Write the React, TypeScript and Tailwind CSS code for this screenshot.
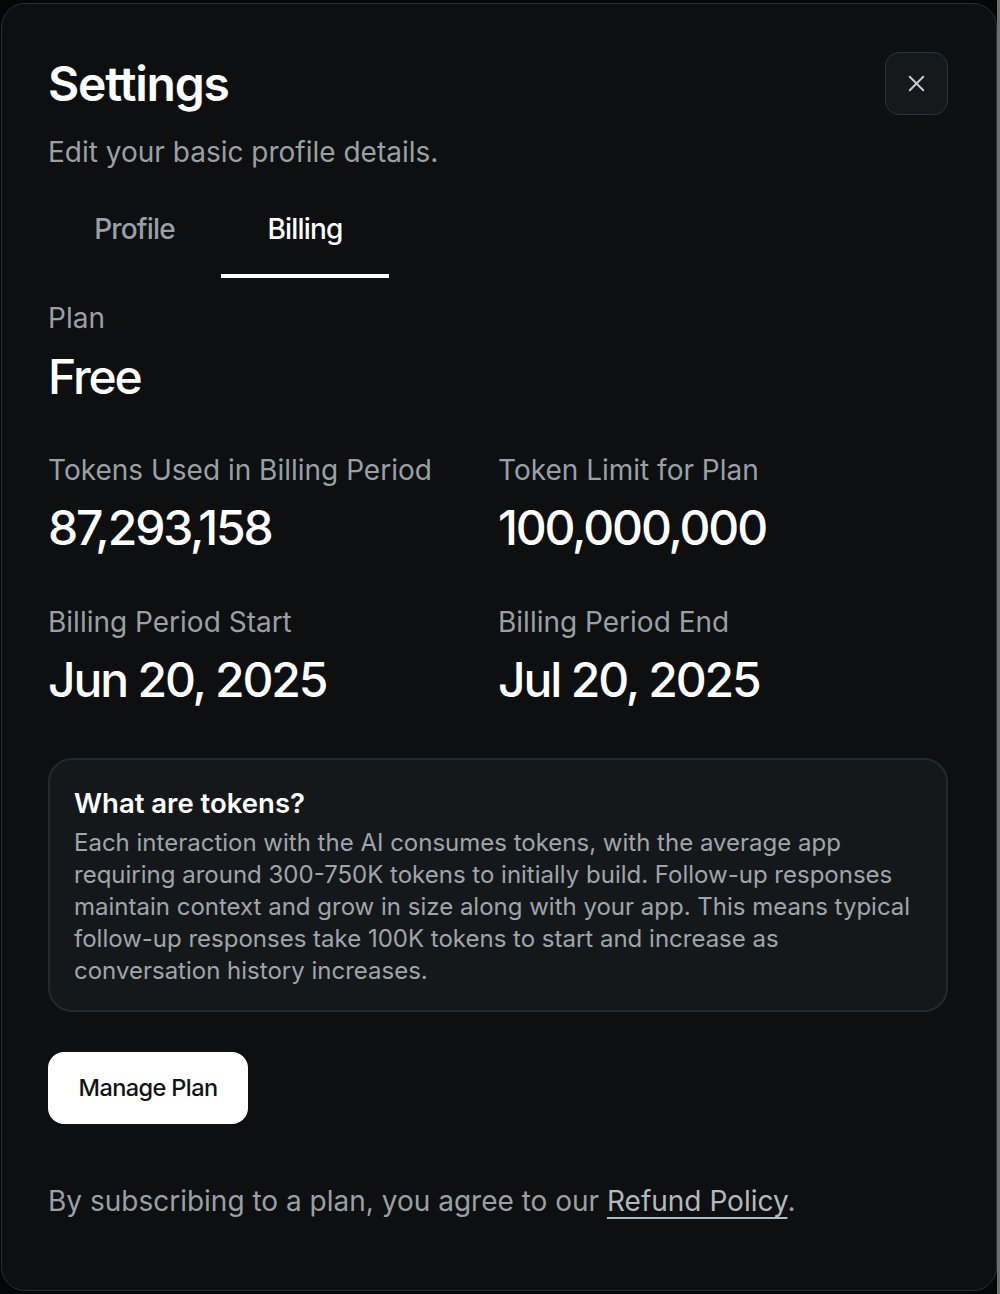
import React from 'react';
import { X } from 'lucide-react';

const stats = [
  { label: 'Tokens Used in Billing Period', value: '87,293,158' },
  { label: 'Token Limit for Plan', value: '100,000,000' },
  { label: 'Billing Period Start', value: 'Jun 20, 2025' },
  { label: 'Billing Period End', value: 'Jul 20, 2025' },
];

const App = () => {
  const [tab, setTab] = React.useState('billing');

  return (
    <div className="flex h-[1294px] w-[1000px] bg-[#050606] font-['Inter','Noto_Sans',sans-serif] antialiased">
      <div className="ml-[1px] mt-[3px] flex h-[1288px] w-[996px] flex-col rounded-[24px] border border-[#2a2e32] bg-[#0d0f10] pl-[46px] pr-[48px] pt-[48px]">
        <div className="flex items-start justify-between">
          <div>
            <h2 className="mt-[4px] text-[48px] font-semibold leading-[56px] tracking-tight text-white">Settings</h2>
            <p className="mt-[20px] text-[28px] leading-[40px] text-[#9aa0a6]">Edit your basic profile details.</p>
          </div>
          <button className="flex h-[63px] w-[63px] items-center justify-center rounded-[14px] border border-[#2e3236] bg-[#16191c] text-[#c9cdd1]">
            <X size={27} strokeWidth={1.75} />
          </button>
        </div>

        <div className="mt-[17px] flex">
          <button
            onClick={() => setTab('profile')}
            className={`flex h-[89px] w-[173px] flex-col items-center justify-between pt-[24px] text-[28px] font-medium leading-[32px] tracking-[-0.03em] ${tab === 'profile' ? 'text-white' : 'text-[#9aa0a6]'}`}
          >
            Profile
            <span className={`h-[4px] w-full ${tab === 'profile' ? 'bg-white' : 'bg-transparent'}`} />
          </button>
          <button
            onClick={() => setTab('billing')}
            className={`flex h-[89px] w-[168px] flex-col items-center justify-between pt-[24px] text-[28px] font-medium leading-[32px] tracking-[-0.03em] ${tab === 'billing' ? 'text-white' : 'text-[#9aa0a6]'}`}
          >
            Billing
            <span className={`h-[4px] w-full ${tab === 'billing' ? 'bg-white' : 'bg-transparent'}`} />
          </button>
        </div>

        <div className="mt-[20px]">
          <p className="text-[28px] leading-[40px] text-[#9aa0a6]">Plan</p>
          <p className="mt-[11px] text-[48px] font-medium leading-[56px] tracking-[-0.045em] text-white">Free</p>
        </div>

        <div className="mt-[45px] grid grid-cols-2 gap-y-[46px]">
          {stats.map((s) => (
            <div key={s.label}>
              <p className="text-[28px] leading-[40px] text-[#9aa0a6]">{s.label}</p>
              <p className="mt-[10px] text-[48px] font-medium leading-[56px] tracking-[-0.045em] text-white">{s.value}</p>
            </div>
          ))}
        </div>

        <div className="mt-[50px] rounded-[24px] border-2 border-[#25292d] bg-[#15181b] px-[24px] py-[23px]">
          <h3 className="text-[27.5px] font-semibold leading-[40px] text-white">What are tokens?</h3>
          <p className="mt-[4px] text-[24px] leading-[32px] text-[#a0a5aa]">
            Each interaction with the AI consumes tokens, with the average app requiring around 300-750K tokens to initially build. Follow-up responses maintain context and grow in size along with your app. This means typical follow-up responses take 100K tokens to start and increase as conversation history increases.
          </p>
        </div>

        <button className="mt-[40px] flex h-[72px] w-[200px] items-center justify-center rounded-[16px] bg-white text-[23.5px] font-medium tracking-tight text-[#111315]">
          Manage Plan
        </button>

        <p className="mt-[57px] text-[28px] leading-[40px] text-[#9aa0a6]">
          By subscribing to a plan, you agree to our{' '}
          <a href="#" className="text-[#b4b9be] underline underline-offset-[6px]">Refund Policy</a>.
        </p>
      </div>
      <div className="flex-1 bg-[#6e6e6e]" />
    </div>
  );
};

export default App;
